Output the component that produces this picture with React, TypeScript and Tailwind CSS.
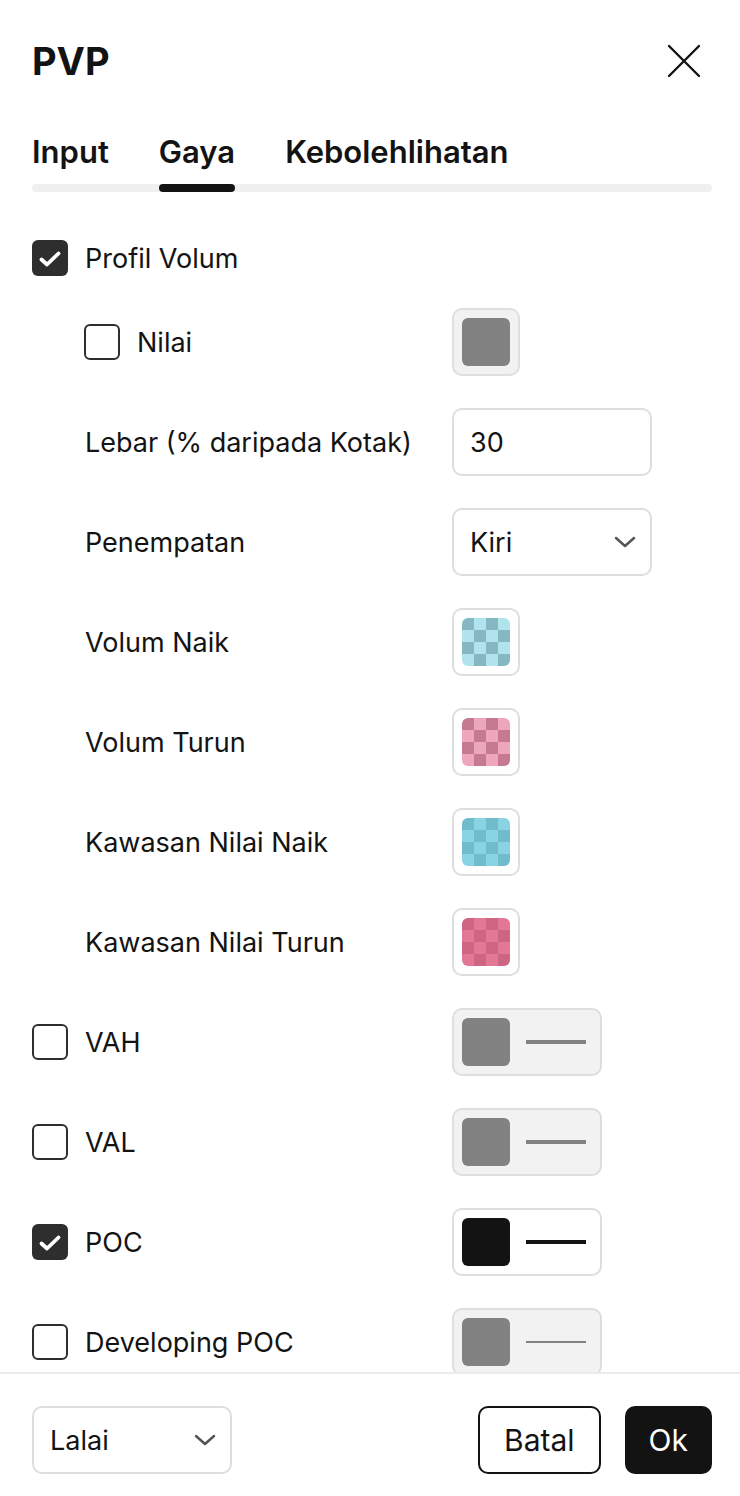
import React from "react";

const FONT = { fontFamily: "Inter, 'Noto Sans', 'Liberation Sans', sans-serif" };

// checker palettes: [dark, light]
const CHECKERS: Record<string, [string, string]> = {
  naik: ["#86b8c3", "#b1e3ec"],
  turun: ["#c67a92", "#eea6bc"],
  kawNaik: ["#70bccc", "#8ad3e3"],
  kawTurun: ["#cd6583", "#e37896"],
};

function Checkbox({ checked }: { checked?: boolean }) {
  if (checked) {
    return (
      <div className="w-9 h-9 shrink-0 rounded-[6px] bg-[#2e2e2e]">
        <svg width="36" height="36" viewBox="0 0 36 36" fill="none">
          <path d="M9.5 19.5l5.5 5 11.5-11" stroke="white" strokeWidth="3.8" strokeLinecap="round" strokeLinejoin="round" />
        </svg>
      </div>
    );
  }
  return <div className="w-9 h-9 shrink-0 rounded-[6px] border-2 border-[#2e2e2e] bg-white" />;
}

function Chevron() {
  return (
    <svg width="22" height="12" viewBox="0 0 22 12" fill="none">
      <path d="M2 2l9 8 9-8" stroke="#555" strokeWidth="2.5" strokeLinecap="round" strokeLinejoin="round" />
    </svg>
  );
}

function Swatch({ color, disabled }: { color: string; disabled?: boolean }) {
  return (
    <div
      className={`w-[68px] h-[68px] rounded-[10px] border-2 border-[#dedede] flex items-center justify-center ${
        disabled ? "bg-[#f2f2f2]" : "bg-white"
      }`}
    >
      <div className="w-12 h-12 rounded-[6px]" style={{ background: color }} />
    </div>
  );
}

function CheckerSwatch({ palette }: { palette: [string, string] }) {
  const cells = Array.from({ length: 16 }, (_, i) => {
    const r = Math.floor(i / 4);
    const c = i % 4;
    return (r + c) % 2 === 0 ? palette[0] : palette[1];
  });
  return (
    <div className="w-[68px] h-[68px] rounded-[10px] border-2 border-[#dedede] bg-white flex items-center justify-center">
      <div className="w-12 h-12 rounded-[6px] overflow-hidden grid grid-cols-4">
        {cells.map((c, i) => (
          <div key={i} style={{ background: c }} />
        ))}
      </div>
    </div>
  );
}

function LineSwatch({ color, line, thickness, disabled }: { color: string; line: string; thickness: number; disabled?: boolean }) {
  return (
    <div
      className={`w-[150px] h-[68px] rounded-[10px] border-2 border-[#dedede] flex items-center pl-2 gap-4 ${
        disabled ? "bg-[#f2f2f2]" : "bg-white"
      }`}
    >
      <div className="w-12 h-12 rounded-[6px]" style={{ background: color }} />
      <div className="w-[60px]" style={{ height: thickness, background: line }} />
    </div>
  );
}

function Row({ label, indent, check, children, className = "" }: {
  label: string;
  indent?: boolean;
  check?: boolean;
  children?: React.ReactNode;
  className?: string;
}) {
  return (
    <div className={`flex items-center h-[68px] ${className}`}>
      <div className={`flex items-center gap-[17px] w-[420px] shrink-0 ${indent ? "pl-[52px]" : ""}`}>
        {check !== undefined && <Checkbox checked={check} />}
        <span className={`text-[27px] text-[#131313] pt-[2px] ${indent && check === undefined ? "pl-[1px]" : ""}`}>{label}</span>
      </div>
      {children}
    </div>
  );
}

export default function App() {
  return (
    <div className="w-[740px] h-[1496px] bg-white flex flex-col overflow-hidden" style={FONT}>
      {/* Header */}
      <div className="flex items-center justify-between pl-8 pr-7 pt-[37px] h-[85px]">
        <h1 className="text-[38px] font-bold text-[#131313] leading-none">PVP</h1>
        <button className="mr-[11px]">
          <svg width="34" height="34" viewBox="0 0 34 34" fill="none">
            <path d="M2 2l30 30M32 2L2 32" stroke="#131313" strokeWidth="2.4" strokeLinecap="round" />
          </svg>
        </button>
      </div>

      {/* Tabs */}
      <div className="pl-8 pr-7 mt-[50px]">
        <div className="flex gap-[50px] h-[44px] items-start">
          {["Input", "Gaya", "Kebolehlihatan"].map((t) => (
            <div key={t} className="text-[31px] font-semibold text-[#131313] leading-none pt-[1px]">
              {t}
            </div>
          ))}
        </div>
        <div className="relative h-2 rounded-full bg-[#f0f0f0] mt-[5px]">
          <div className="absolute left-[127px] top-0 h-2 w-[76px] rounded-full bg-[#131313]" />
        </div>
      </div>

      {/* Content */}
      <div className="flex-1 overflow-hidden pl-8 pr-7 pt-8">
        <Row label="Profil Volum" check={true} />
        <Row label="Nilai" indent check={false} className="mt-4">
          <Swatch color="#828282" disabled />
        </Row>
        <Row label="Lebar (% daripada Kotak)" indent className="mt-8">
          <div className="w-[200px] h-[68px] rounded-[10px] border-2 border-[#dedede] flex items-center px-4 pt-[2px] text-[27px] text-[#131313]">
            30
          </div>
        </Row>
        <Row label="Penempatan" indent className="mt-8">
          <div className="w-[200px] h-[68px] rounded-[10px] border-2 border-[#dedede] flex items-center justify-between pl-4 pr-[14px] text-[27px] text-[#131313]">
            <span className="pt-[2px]">Kiri</span>
            <Chevron />
          </div>
        </Row>
        <Row label="Volum Naik" indent className="mt-8">
          <CheckerSwatch palette={CHECKERS.naik} />
        </Row>
        <Row label="Volum Turun" indent className="mt-8">
          <CheckerSwatch palette={CHECKERS.turun} />
        </Row>
        <Row label="Kawasan Nilai Naik" indent className="mt-8">
          <CheckerSwatch palette={CHECKERS.kawNaik} />
        </Row>
        <Row label="Kawasan Nilai Turun" indent className="mt-8">
          <CheckerSwatch palette={CHECKERS.kawTurun} />
        </Row>
        <Row label="VAH" check={false} className="mt-8">
          <LineSwatch color="#828282" line="#828282" thickness={4} disabled />
        </Row>
        <Row label="VAL" check={false} className="mt-8">
          <LineSwatch color="#828282" line="#828282" thickness={4} disabled />
        </Row>
        <Row label="POC" check={true} className="mt-8">
          <LineSwatch color="#131313" line="#131313" thickness={4} />
        </Row>
        <Row label="Developing POC" check={false} className="mt-8">
          <LineSwatch color="#828282" line="#828282" thickness={2} disabled />
        </Row>
      </div>

      {/* Footer */}
      <div className="border-t-2 border-[#ececec] pl-8 pr-7 pt-[32px] pb-[22px] flex items-center justify-between">
        <div className="w-[200px] h-[68px] rounded-[10px] border-2 border-[#dedede] flex items-center justify-between pl-4 pr-[14px] text-[27px] text-[#131313]">
          <span className="pt-[2px]">Lalai</span>
          <Chevron />
        </div>
        <div className="flex gap-6">
          <button className="h-[68px] px-6 rounded-[10px] border-2 border-[#131313] bg-white text-[30px] text-[#131313]">
            Batal
          </button>
          <button className="h-[68px] px-6 rounded-[10px] bg-[#131313] text-[30px] text-white">Ok</button>
        </div>
      </div>
    </div>
  );
}
